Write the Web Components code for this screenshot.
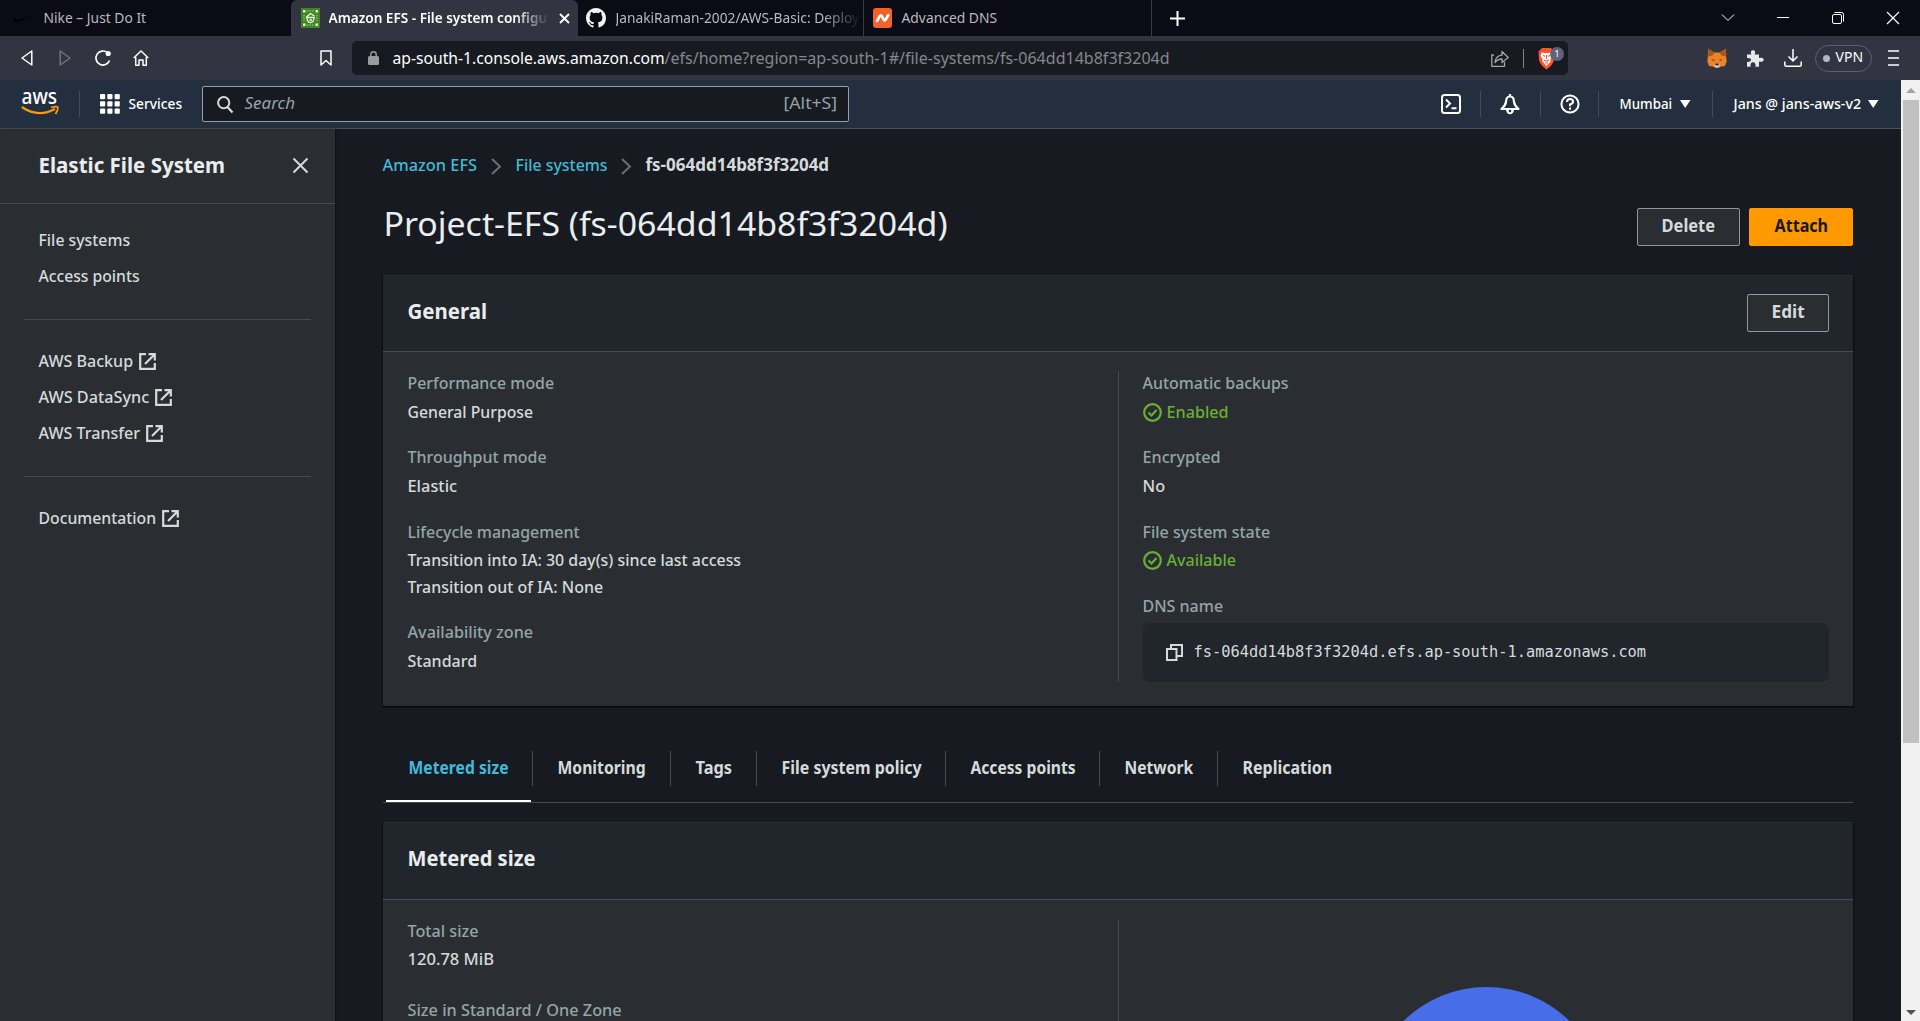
<!DOCTYPE html>
<html lang="en">
<head>
<meta charset="utf-8">
<title>Amazon EFS - File system configuration</title>
<style>
html,body{margin:0;height:100%;overflow:hidden;background:#171a21}
body{font-family:"Noto Sans","Open Sans",sans-serif;font-size:17px;line-height:28px;color:#d5dbdb}
</style>
</head>
<body>
<app-window></app-window>
<script>
const make = (name, html) => customElements.define(name, class extends HTMLElement {
  constructor(){ super(); this.attachShadow({mode:'open'}).innerHTML = html; }
});
const base = '<style>*{box-sizing:border-box}svg{display:block;flex:none;overflow:visible}</style>';

make('tab-strip', base + `<style>
:host{display:flex;height:36px;background:#0a0b14;color:#b9b9be;font-size:15px;line-height:28px}
.tab{display:flex;align-items:center;height:36px;flex:none}
.tab f-t{margin-top:-2px}
.active{background:#323442;color:#fff;font-weight:600;border-radius:6px 6px 0 0}
.fade{-webkit-mask-image:linear-gradient(90deg,#000 85%,transparent 101%);mask-image:linear-gradient(90deg,#000 85%,transparent 101%);display:flex}
.sep{border-right:1px solid #3a3b42}
.win{display:flex;align-items:center;margin-left:auto;padding-right:21px;gap:43px}
</style>
<div class="tab" style="width:291px;padding-left:14px;gap:12px">
 <svg width="18" height="18" viewBox="0 0 18 18"><path d="M2 8C-.5 11 0 14 4 13L18 7 5 11C2 11.500 1.500 10 2 8Z" fill="#000"/></svg><f-t w="102">Nike – Just Do It</f-t></div>
<div class="tab active" style="width:287px;padding-left:10px;gap:9px">
 <svg width="19" height="20" viewBox="0 0 19 20"><path fill="#3f8624" d="M0 0h19v20H0z"/><g fill="#e8ffe0"><path d="M2 2h2.500v2.500H2zM14.500 2h2.500v2.500h-2.500zM2 15.500h2.500v2.500H2zM14.500 15.500h2.500v2.500h-2.500z"/></g><path d="M5 9.500h9M5.500 9l4-3.500L13.500 8M6 10.500q.5 4 3.500 4t3.500-4M8.500 12h2.500" fill="none" stroke="#e8ffe0" stroke-width="1.300"/><path d="M6 3h7M6 17h7M3 7v6M16 7v6" stroke="#9ccb88" stroke-dasharray="1.500 1"/></svg>
 <span class="fade"><f-t w="218">Amazon EFS - File system configu</f-t></span>
 <svg width="11" height="11" viewBox="0 0 11 11" style="margin-left:3px"><path d="M1 1l9 9M10 1l-9 9" stroke="#fff" stroke-width="1.900"/></svg></div>
<div class="tab sep" style="width:286px;padding-left:8px;gap:10px">
 <svg width="20" height="20" viewBox="0 0 16 16"><path fill="#f4f4f4" d="M8 0C3.580 0 0 3.580 0 8c0 3.540 2.290 6.530 5.470 7.590.4.070.55-.17.55-.38 0-.19-.01-.82-.01-1.490-2.010.37-2.530-.49-2.690-.94-.09-.23-.48-.94-.82-1.130-.28-.15-.68-.52-.01-.53.63-.01 1.080.58 1.230.82.72 1.210 1.870.87 2.330.66.07-.52.28-.87.51-1.070-1.780-.2-3.640-.89-3.640-3.950 0-.87.31-1.590.82-2.150-.08-.2-.36-1.020.08-2.120 0 0 .67-.21 2.200.82A7.600 7.600 0 0 1 8 3.860c.68 0 1.360.09 2 .27 1.530-1.040 2.200-.82 2.200-.82.44 1.100.16 1.920.08 2.120.51.56.82 1.270.82 2.150 0 3.070-1.870 3.750-3.650 3.950.29.25.54.73.54 1.480 0 1.070-.01 1.930-.01 2.200 0 .21.15.46.55.38A8.010 8.010 0 0 0 16 8c0-4.420-3.580-8-8-8Z"/></svg>
 <span class="fade"><f-t w="243">JanakiRaman-2002/AWS-Basic: Deploy</f-t></span></div>
<div class="tab sep" style="width:288px;padding-left:9px;gap:10px">
 <svg width="19" height="20" viewBox="0 0 19 20"><rect width="19" height="20" rx="3" fill="#f2622a"/><path d="M4 13l3-5.300q.8-1 1.600 0L10.800 12q.8 1 1.600 0L15.300 7" fill="none" stroke="#fff" stroke-width="2.600" stroke-linejoin="round" stroke-linecap="round"/></svg><f-t w="95">Advanced DNS</f-t></div>
<div class="tab" style="padding-left:18px"><svg width="15" height="15" viewBox="0 0 15 15"><path d="M7.500 0v15M0 7.500h15" stroke="#fff" stroke-width="2"/></svg></div>
<div class="win">
 <svg width="12" height="12" viewBox="0 0 12 12"><path d="M0 2.500l6 6 6-6" fill="none" stroke="#fff"/></svg>
 <svg width="12" height="12" viewBox="0 0 12 12"><path d="M0 5.500h12" stroke="#fff"/></svg>
 <svg width="12" height="12" viewBox="0 0 12 12"><rect x=".5" y="2.500" width="9" height="9" rx="1.500" fill="none" stroke="#fff"/><path d="M2.500.5H9.500Q11.500.5 11.500 2.500V9.500" fill="none" stroke="#fff"/></svg>
 <svg width="12" height="12" viewBox="0 0 12 12"><path d="M0 0l12 12M12 0L0 12" stroke="#fff" stroke-width="1.200"/></svg></div>`);

make('tool-bar', base + `<style>
:host{display:flex;align-items:center;height:44px;background:#323442;padding:0 0 0 21px;font-size:16px}
.url{display:flex;align-items:center;margin-left:20px;width:1216px;height:34px;background:#181a21;border-radius:5px;padding-left:16px;color:#86878d;flex:none}
b{font-weight:400;color:#fff;margin-left:14px}
.shield{position:relative;margin-left:14px}
.badge{position:absolute;left:12px;top:0;width:14px;height:14px;border-radius:7px;background:#5f6279;color:#fff;font-size:9.500px;line-height:14px;text-align:center}
.vpn{display:flex;align-items:center;width:57px;height:27px;border:1px solid #5c5e78;border-radius:14px;color:#fff;font-size:14px;line-height:24px;margin-left:12px;padding-left:7px}
.vpn i{width:7px;height:7px;border-radius:4px;background:#b3b4cb;margin-right:6px}
.vpn f-t{margin-top:-2px}
</style>
<svg width="12" height="16" viewBox="0 0 12 16"><path d="M10.800 1v14L1 8z" fill="none" stroke="#fff" stroke-width="1.500" stroke-linejoin="round"/></svg>
<svg width="12" height="16" viewBox="0 0 12 16" style="margin-left:26px"><path d="M1.200 1v14L11 8z" fill="none" stroke="#72747f" stroke-width="1.500" stroke-linejoin="round"/></svg>
<svg width="16" height="16" viewBox="0 0 16 16" style="margin-left:24px"><path d="M12.500 2.700A7 7 0 1 0 14.500 10.500" fill="none" stroke="#fff" stroke-width="1.700"/><circle cx="13.200" cy="3.500" r="2.600" fill="#fff"/></svg>
<svg width="16" height="16" viewBox="0 0 16 16" style="margin-left:22px"><path d="M.7 8L8 1l7.300 7M2.700 7v8.200h3.300V10h4v5.200h3.300V7" fill="none" stroke="#fff" stroke-width="1.500" stroke-linejoin="round"/></svg>
<svg width="12" height="16" viewBox="0 0 12 16" style="margin-left:171px"><path d="M1 1h10v14L6 10.500 1 15z" fill="none" stroke="#fff" stroke-width="1.500" stroke-linejoin="round"/></svg>
<div class="url">
 <svg width="11" height="14" viewBox="0 0 11 14"><rect y="5" width="11" height="9" rx="1.500" fill="#9a9ba5"/><path d="M2.800 5.500V3.500a2.700 2.700 0 0 1 5.400 0v2" fill="none" stroke="#9a9ba5" stroke-width="1.400"/></svg>
 <b><f-t w="271.500">ap-south-1.console.aws.amazon.com</f-t></b><f-t w="504.500">/efs/home?region=ap-south-1#/file-systems/fs-064dd14b8f3f3204d</f-t>
 <svg width="18" height="17" viewBox="0 0 18 17" style="margin-left:322px"><path d="M3 5H.8v11.300H13.500V12M4 12.500C4.500 8 7 5.500 11 5.200V1.500l6.200 6-6.200 5V9C8 9 6 10 4 12.500Z" fill="none" stroke="#a4a5a9" stroke-width="1.300" stroke-linejoin="round"/></svg>
 <svg width="1" height="19" style="margin-left:14px"><path d="M0 0h1v19H0z" fill="#85868c"/></svg>
 <div class="shield"><svg width="17" height="23" viewBox="0 0 17 23"><path d="M4 1h9l3.500 3.500L16 13q-1 5-7.500 9.500Q2 18 1 13L.5 4.500Z" fill="#fb542b"/><path d="M3.500 5.500l3 .5h4l3-.5 1 3.500-2 3v2.500L8.500 19 4.500 14.500V12L2.500 9z" fill="#fff"/><path d="M5 8.500l2 .7M12 8.500l-2 .7M8.500 8v4M6 13l2.500 1.200L11 13M7 16h3" stroke="#fb542b" stroke-width="1.200" fill="none"/></svg><span class="badge">1</span></div>
</div>
<svg width="20" height="20" viewBox="0 0 20 20" style="margin-left:139px"><path d="M1 .8L7.500 4.500h5L19 .8l.2 8.700.5 4-1.700 4.500-5 .7-1.500 1.300H8.500L7 18.700l-5-.7-1.700-4.500.5-4Z" fill="#ee8323"/><path d="M1 .8L7.500 4.500 5.500 7.500 1.200 8.500zM19 .8L12.500 4.500l2 3 4.300 1z" fill="#a9561d"/><path d="M4.500 11l3.200.5-.8 2zM15.500 11l-3.200.5.8 2z" fill="#8a4a20"/><path d="M7.500 15.500h5l.5 2.500-1.800 1.700H8.800L7 18z" fill="#d7c1b3"/><path d="M8.300 15.500h3.400v1.700H8.300z" fill="#2b2320"/></svg>
<svg width="18" height="17" viewBox="0 0 18 17" style="margin-left:19px"><path d="M1 4.500h4.300Q4 .2 7 .2T8.700 4.500H13v3.600q4.700-1.200 4.700 1.700T13 11.500v5.300H9.500Q10 12.300 7 12.300T4.600 16.800H1V12Q5 12 5 9.800T1 8z" fill="#e9e9ec"/></svg>
<svg width="18" height="18" viewBox="0 0 18 18" style="margin-left:20px;margin-right:1px"><path d="M9 0v12M4.500 7.500L9 12l4.500-4.500M.8 12.500v3.200q0 1.500 1.500 1.500h13.400q1.500 0 1.500-1.500v-3.200" fill="none" stroke="#fff" stroke-width="1.500"/></svg>
<div class="vpn"><i></i><f-t w="27">VPN</f-t></div>
<svg width="11" height="16" viewBox="0 0 11 16" style="margin-left:16px"><path d="M0 1h11M0 8h11M0 15h11" stroke="#fff" stroke-width="1.600"/></svg>`);

make('aws-header', base + `<style>
:host{display:flex;align-items:center;height:49px;background:#232f3e;border-bottom:1px solid #4b505b;padding-left:21px;color:#fff;font-size:15px;font-weight:500}
.sep{width:1px;height:26px;background:#414d5c;flex:none}
.logo{width:38px;height:26px;font-size:21.500px;line-height:16px;display:flex;flex-direction:column;margin-top:-2px}
.logo f-t{margin:-2px 0 0 1px}
.up{margin-top:-2px}
.search{display:flex;align-items:center;margin-left:20px;width:647px;height:36px;background:#171a21;border:1px solid #95a0a6;border-radius:2px;padding:0 11px 0 14px;color:#95a5a6;font-size:17px;font-weight:400}
</style>
<div class="logo"><f-t w="35">aws</f-t><svg width="38" height="10" viewBox="0 0 38 10" style="margin-top:2px"><path d="M.8 1Q17 12 34 3" fill="none" stroke="#f90" stroke-width="2.300"/><path d="M30 1.500q7-2 7 .2T34.500 8" fill="none" stroke="#f90" stroke-width="1.700"/></svg></div>
<div class="sep" style="margin-left:20px"></div>
<svg width="20" height="20" viewBox="0 0 20 20" fill="#fff" style="margin-left:20px"><g id="r"><rect width="5.200" height="5.200" rx="1"/><rect x="7.300" width="5.200" height="5.200" rx="1"/><rect x="14.600" width="5.200" height="5.200" rx="1"/></g><use href="#r" y="7.300"/><use href="#r" y="14.600"/></svg>
<f-t class="up" w="53" style="margin-left:9px">Services</f-t>
<div class="search"><svg width="16" height="17" viewBox="0 0 16 17"><circle cx="6.700" cy="6.700" r="5.600" fill="none" stroke="#d5dbdb" stroke-width="2"/><path d="M10.500 11l5 5.500" stroke="#d5dbdb" stroke-width="2.200"/></svg><f-t class="up" w="50" style="margin-left:12px;font-style:italic">Search</f-t><f-t class="up" w="53" style="margin-left:auto">[Alt+S]</f-t></div>
<svg width="20" height="20" viewBox="0 0 20 20" style="margin-left:592px"><rect x="1" y="1" width="18" height="18" rx="2.500" fill="none" stroke="#fff" stroke-width="2"/><path d="M5 5.500L9 9.500l-4 4M10.500 14.200H15.500" fill="none" stroke="#fff" stroke-width="2"/></svg>
<div class="sep" style="margin-left:19px"></div>
<svg width="20" height="21" viewBox="0 0 20 21" style="margin-left:19px"><path d="M10 0v2M10 2.500Q6 2.500 6 8 5.500 11.500 1.500 15h17Q14.500 11.500 14 8 14 2.500 10 2.500Z" fill="none" stroke="#fff" stroke-width="2.200" stroke-linejoin="round"/><path d="M6 15.500q.5 4.700 4 4.700t4-4.700Z" fill="#fff"/><circle cx="10" cy="17" r="1.300" fill="#232f3e"/></svg>
<div class="sep" style="margin-left:20px"></div>
<svg width="20" height="20" viewBox="0 0 20 20" style="margin-left:19px"><circle cx="10" cy="10" r="8.600" fill="none" stroke="#fff" stroke-width="2"/><path d="M7 8q0-3 3-3t3 2.700Q13 9.500 10 10.500v1.800M10 13.500v2.200" fill="none" stroke="#fff" stroke-width="2"/></svg>
<div class="sep" style="margin-left:18px"></div>
<f-t class="up" w="52" style="margin-left:21px">Mumbai</f-t>
<svg width="11" height="8" viewBox="0 0 11 8" style="margin-left:8px"><path d="M0 0h10.500L5.200 8z" fill="#fff"/></svg>
<div class="sep" style="margin-left:21px"></div>
<f-t class="up" w="127" style="margin-left:21px">Jans @ jans-aws-v2</f-t>
<svg width="11" height="8" viewBox="0 0 11 8" style="margin-left:7px"><path d="M0 0h10.500L5.200 8z" fill="#fff"/></svg>`);

make('nav-link', base + `<style>
:host{display:flex;align-items:center;height:36px;padding-left:39px;gap:6px}
:host(:not([external])) svg{display:none}
</style><slot></slot><svg width="17" height="17" viewBox="0 0 17 17"><path d="M7 1.200H1.200v14.600h14.600V10M9.500 1.200h6.300v6.300M15.500 1.500L6 11" fill="none" stroke="#d5dbdb" stroke-width="2.200"/></svg>`);

make('side-nav', base + `<style>
:host{display:block;width:335px;flex:none;background:#2a2e33;box-shadow:1px 0 1px #101217;font-weight:500}
header{display:flex;align-items:center;height:75px;border-bottom:1px solid #464a52;padding-left:39px;font-size:21.500px;font-weight:700;color:#eaeded}
header f-t{margin-top:-2px}
nav{padding:18px 0}
hr{border:0;height:1px;background:#464a52;margin:25px 24px 23px;width:287px}
</style>
<header><f-t w="186">Elastic File System</f-t><svg width="15" height="15" viewBox="0 0 15 15" style="margin-left:68px;margin-top:-1px"><path d="M.5.5l14 14M14.500.5l-14 14" stroke="#d5dbdb" stroke-width="2"/></svg></header>
<nav><nav-link><f-t w="91">File systems</f-t></nav-link><nav-link><f-t w="100.500">Access points</f-t></nav-link>
<hr>
<nav-link external><f-t w="94">AWS Backup</f-t></nav-link><nav-link external><f-t w="110">AWS DataSync</f-t></nav-link><nav-link external><f-t w="101">AWS Transfer</f-t></nav-link>
<hr>
<nav-link external><f-t w="117">Documentation</f-t></nav-link></nav>`);

make('aws-button', base + `<style>
:host{display:flex;align-items:center;justify-content:center;height:38px;border:1px solid #8d999b;border-radius:2px;background:#2a2e33;font-weight:700;line-height:34px;padding-bottom:2px;box-sizing:border-box;color:#d5dbdb}
:host([primary]){background:#f90;border-color:#f90;color:#16191f}
</style><slot></slot>`);

make('info-card', base + `<style>
:host{display:flex;flex-direction:column;background:#2a2e33;box-shadow:0 1px 1px #090a0d,1px 1px 1px #0e1014,-1px 1px 1px #0e1014}
header{display:flex;justify-content:space-between;align-items:center;height:var(--head,77px);flex:none;background:#21252c;border-top:1px solid #2a2e33;border-bottom:1px solid #464a52;padding:0 24px 1px 25px;font-size:22px;font-weight:700;color:#eaeded}
.h{margin-top:-7px}.a{font-size:17px}
.body{display:grid;grid-template-columns:736px 734px;grid-template-rows:minmax(0,1fr);flex:1;min-height:0;padding:19px 0 24px}
.r{border-left:1px solid #464a52;padding:0 24px;margin-left:-1px}
.l{padding-left:24.500px}
</style><header><div class="h"><slot name="title"></slot></div><div class="a"><slot name="action"></slot></div></header>
<div class="body"><div class="l"><slot></slot></div><div class="r"><slot name="right"></slot></div></div>`);

make('kv-item', base + `<style>
:host{display:flow-root;height:75px;font-weight:500}
.k{color:#95a5a6;height:28px;margin-top:-2.500px;margin-bottom:1px}
.v{display:flex;flex-direction:column}
:host([tight]) .k{margin-bottom:0}
</style><div class="k"><slot name="k"></slot></div><div class="v"><slot></slot></div>`);

make('status-ok', base + `<style>:host{display:flex;align-items:center;gap:5px;color:#6aaf35}svg{margin-top:1px}</style>
<svg width="19" height="19" viewBox="0 0 19 19"><circle cx="9.500" cy="9.500" r="8.300" fill="none" stroke="#6aaf35" stroke-width="2.200"/><path d="M5.500 9.500l3 3 5-5.500" fill="none" stroke="#6aaf35" stroke-width="2.200"/></svg><slot></slot>`);

make('tab-list', base + `<style>
:host{display:flex;height:52px;border-bottom:1px solid #464a52;font-weight:700;width:1470px}
span{display:flex;height:35px;align-items:center;padding:0 24px 1px 25px;border-right:1px solid #464a52;flex:none;line-height:32px}
span:last-child{border:0}
.on{color:#44b9d6;border:0;height:51px;align-items:start;padding:1px 0 0;margin-left:3px;border-bottom:2px solid #fff;width:145px;justify-content:center}
i{width:1px;height:35px;background:#464a52;margin-left:1px}
</style>
<span class="on"><f-t w="99.500">Metered size</f-t></span><i></i>
<span><f-t w="87.500">Monitoring</f-t></span><span><f-t w="36">Tags</f-t></span><span style="padding-right:23.500px"><f-t w="139.500">File system policy</f-t></span><span style="padding-right:23.500px"><f-t w="104.500">Access points</f-t></span><span><f-t w="68">Network</f-t></span><span><f-t w="89">Replication</f-t></span>`);

make('efs-page', base + `<style>
:host{display:flex;flex-direction:column;flex:1;min-width:0;padding:22px 48px 0;overflow:hidden}
.crumbs{display:flex;align-items:center;height:28px;color:#44b9d6;font-weight:500}
.crumbs svg{margin:3px 14.500px 0 14px}
.title{display:flex;align-items:center;height:38px;margin-top:29px}
h1{margin:-8px auto 0 1px;font-size:33.500px;font-weight:400;line-height:38px;color:#eaeded}
.dns{display:flex;align-items:center;height:59px;width:686px;background:#21252c;border-radius:7px;padding-left:23px;gap:11px;font-family:"DejaVu Sans Mono",monospace;font-size:15.500px;margin-top:2.500px;font-weight:400}
.dns f-t{margin-top:-1px}
.pie{width:237px;height:237px;border-radius:50%;background:#486de8;margin:68px auto 0;flex:none}
#g{height:431px;margin-top:29px;flex:none}
#m{height:500px;margin-top:19px;flex:none;--head:78px}
tab-list{margin-top:45px;flex:none}
</style>
<div class="crumbs"><f-t w="94">Amazon EFS</f-t><svg width="10" height="17" viewBox="0 0 10 17"><path d="M1 1l8 7.500-8 7.500" fill="none" stroke="#687078" stroke-width="2"/></svg><f-t w="91.500">File systems</f-t><svg width="10" height="17" viewBox="0 0 10 17"><path d="M1 1l8 7.500-8 7.500" fill="none" stroke="#687078" stroke-width="2"/></svg><b style="color:#d5dbdb"><f-t w="183">fs-064dd14b8f3f3204d</f-t></b></div>
<div class="title"><h1><f-t w="563.500">Project-EFS (fs-064dd14b8f3f3204d)</f-t></h1>
<aws-button style="width:103px;margin-right:9px"><f-t w="53">Delete</f-t></aws-button><aws-button primary style="width:104px"><f-t w="53">Attach</f-t></aws-button></div>
<info-card id="g"><f-t slot="title" w="79">General</f-t><aws-button slot="action" style="width:82px"><f-t w="32.500">Edit</f-t></aws-button>
 <kv-item style="height:74px"><f-t slot="k" w="146">Performance mode</f-t><f-t w="125">General Purpose</f-t></kv-item>
 <kv-item><f-t slot="k" w="138.500">Throughput mode</f-t><f-t w="49">Elastic</f-t></kv-item>
 <kv-item tight style="height:100px"><f-t slot="k" w="171.500">Lifecycle management</f-t><f-t w="333" style="height:27px">Transition into IA: 30 day(s) since last access</f-t><f-t w="195">Transition out of IA: None</f-t></kv-item>
 <kv-item style="height:60px"><f-t slot="k" w="125">Availability zone</f-t><f-t w="69">Standard</f-t></kv-item>
 <div slot="right">
 <kv-item style="height:74px"><f-t slot="k" w="145.500">Automatic backups</f-t><status-ok><f-t w="61.500">Enabled</f-t></status-ok></kv-item>
 <kv-item><f-t slot="k" w="77.500">Encrypted</f-t><f-t w="22">No</f-t></kv-item>
 <kv-item tight style="height:74px"><f-t slot="k" w="127">File system state</f-t><status-ok><f-t w="69">Available</f-t></status-ok></kv-item>
 <kv-item style="height:88px"><f-t slot="k" w="80">DNS name</f-t><div class="dns"><svg width="17" height="17" viewBox="0 0 17 17"><path d="M1 5h9.500v11H1zM5 4.500V1H16v11h-5" fill="none" stroke="#d5dbdb" stroke-width="2"/></svg><f-t w="452">fs-064dd14b8f3f3204d.efs.ap-south-1.amazonaws.com</f-t></div></kv-item></div>
</info-card>
<tab-list></tab-list>
<info-card id="m"><f-t slot="title" w="127.500">Metered size</f-t>
 <kv-item tight style="height:79px"><f-t slot="k" w="70.500">Total size</f-t><f-t w="86">120.78 MiB</f-t></kv-item>
 <kv-item><f-t slot="k" w="213.500">Size in Standard / One Zone</f-t></kv-item>
 <div slot="right" style="display:flex"><div class="pie"></div></div>
</info-card>`);

make('scroll-bar', base + `<style>
:host{display:flex;flex-direction:column;align-items:center;width:19px;flex:none;background:#f1f1f1}
.thumb{width:16px;height:643px;background:#c1c1c1;margin:7px 0 auto 1px}
</style><svg width="10" height="5" viewBox="0 0 10 5" style="margin-top:8px"><path d="M0 5l5-5 5 5z" fill="#a3a3a3"/></svg><div class="thumb"></div><svg width="10" height="5" viewBox="0 0 10 5" style="margin-bottom:6px"><path d="M0 0l5 5 5-5z" fill="#505050"/></svg>`);

make('app-window', base + `<style>
:host{display:flex;flex-direction:column;width:1920px;height:1021px;overflow:hidden}
.view{display:flex;flex:1;min-height:0}
.console{display:flex;flex-direction:column;flex:1;min-width:0}
.main{display:flex;flex:1;min-height:0}
aws-header{flex:none}
</style><tab-strip></tab-strip><tool-bar></tool-bar>
<div class="view"><div class="console"><aws-header></aws-header><div class="main"><side-nav></side-nav><efs-page></efs-page></div></div><scroll-bar></scroll-bar></div>`);

/* Single-line label condensed to a given pixel width. */
customElements.define('f-t', class extends HTMLElement {
  constructor(){
    super();
    this.attachShadow({mode:'open'}).innerHTML =
      '<style>:host{display:block;white-space:nowrap;flex:none}span{display:inline-block;transform-origin:0 50%;vertical-align:top}</style><span><slot></slot></span>';
  }
  connectedCallback(){
    const w = parseFloat(this.getAttribute('w')), s = this.shadowRoot.querySelector('span');
    this.style.width = w + 'px';
    const n = s.getBoundingClientRect().width;
    if (n) s.style.transform = 'translateX(-.5px) scaleX(' + ((w + .6) / n) + ')';
  }
});
</script>
</body>
</html>
